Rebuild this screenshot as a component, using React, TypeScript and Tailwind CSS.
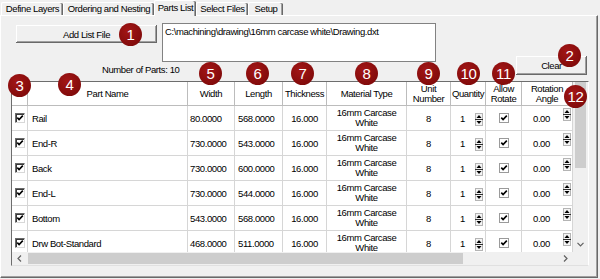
import React from "react";

const widths = [
  "w-[16px]",
  "w-[160px]",
  "w-[47px]",
  "w-[48px]",
  "w-[44px]",
  "w-[80px]",
  "w-[44px]",
  "w-[35px]",
  "w-[36px]",
  "w-[51px]",
];

const rows = [
  ["Rail", "80.0000", "568.0000"],
  ["End-R", "730.0000", "543.0000"],
  ["Back", "730.0000", "600.0000"],
  ["End-L", "730.0000", "544.0000"],
  ["Bottom", "543.0000", "568.0000"],
  ["Drw Bot-Standard", "468.0000", "511.0000"],
];

function Check({ flat }: { flat?: boolean }) {
  return (
    <span
      className={
        flat
          ? "w-[10px] h-[10px] bg-white border border-[#9a9a9a] flex items-center justify-center"
          : "w-[10px] h-[10px] bg-white border border-t-[#6a6a6a] border-l-[#6a6a6a] border-b-[#d8d8d8] border-r-[#d8d8d8] shadow-[inset_1px_1px_0_#3a3a3a] flex items-center justify-center"
      }
    >
      <svg width="8" height="8" viewBox="0 0 8 8">
        <path d="M1.3 3.6 L3.1 5.6 L6.8 1.6" fill="none" stroke="#000" strokeWidth="1.6" />
      </svg>
    </span>
  );
}

function Spin() {
  return (
    <svg width="8" height="13" viewBox="0 0 8 13" className="self-start mt-[2px]">
      <rect x="0.5" y="0.5" width="7" height="12" fill="#f4f4f4" stroke="#b4b4b4" />
      <line x1="0" y1="6.5" x2="8" y2="6.5" stroke="#303030" />
      <path d="M4 2 L6.5 5 L1.5 5 Z" fill="#000" />
      <path d="M1.5 8 L6.5 8 L4 11 Z" fill="#000" />
    </svg>
  );
}

function Badge({ n, cls }: { n: string; cls: string }) {
  return (
    <div
      className={
        "absolute w-[23px] h-[23px] rounded-full bg-[radial-gradient(circle_at_40%_35%,#a31616,#760707)] text-white text-[15px] leading-none flex items-center justify-center font-['Liberation_Sans',Arial,sans-serif] tracking-[-0.3px] " +
        cls
      }
    >
      {n}
    </div>
  );
}

const btn =
  "bg-[#f0f0f0] shadow-[inset_-1px_-1px_0_#696969,inset_1px_1px_0_#ffffff,inset_-2px_-2px_0_#a0a0a0] flex items-center justify-center";

export default function App() {
  const headers: (string | string[])[] = [
    "",
    "Part Name",
    "Width",
    "Length",
    "Thickness",
    "Material Type",
    ["Unit", "Number"],
    "Quantity",
    ["Allow", "Rotate"],
    ["Rotation", "Angle"],
  ];
  return (
    <div className="relative w-[600px] h-[279px] overflow-hidden bg-[#f0f0f0] text-black font-['Liberation_Sans',Arial,sans-serif] text-[9.5px] tracking-[-0.4px] leading-[11px]">
      {/* tabs */}
      <div className="relative z-10 h-[15px] flex items-end pl-[1px]">
        <div className="w-[62px] h-[13px] border-l border-t border-white rounded-t-[2px] shadow-[inset_-1px_0_0_#696969,inset_-2px_0_0_#a0a0a0] flex items-center justify-center pb-[1px]">
          Define Layers
        </div>
        <div className="w-[91px] h-[13px] border-l border-t border-white rounded-t-[2px] shadow-[inset_-1px_0_0_#696969,inset_-2px_0_0_#a0a0a0] flex items-center justify-center pb-[1px]">
          Ordering and Nesting
        </div>
        <div className="w-[42px] h-[16px] -mb-[1px] bg-[#f0f0f0] border-l border-t border-white rounded-t-[2px] shadow-[inset_-1px_0_0_#696969,inset_-2px_0_0_#a0a0a0] flex items-start justify-center pt-[1px]">
          Parts List
        </div>
        <div className="w-[52px] h-[13px] border-l border-t border-white rounded-t-[2px] shadow-[inset_-1px_0_0_#696969,inset_-2px_0_0_#a0a0a0] flex items-center justify-center pb-[1px]">
          Select Files
        </div>
        <div className="w-[35px] h-[13px] border-l border-t border-white rounded-t-[2px] shadow-[inset_-1px_0_0_#696969,inset_-2px_0_0_#a0a0a0] flex items-center justify-center pb-[1px]">
          Setup
        </div>
      </div>

      {/* panel */}
      <div className="w-[598px] h-[263px] border-t border-l border-white border-r border-r-[#696969] border-b border-b-[#696969] shadow-[inset_-1px_-1px_0_#a0a0a0] flex flex-col">
        {/* top section */}
        <div className="h-[65px] flex items-start">
          <div className="ml-[15px] w-[141px] flex flex-col">
            <div className={btn + " mt-[9px] h-[18px] w-[141px]"}>Add List File</div>
            <div className="mt-[21px] ml-[86px] whitespace-nowrap">Number of Parts: 10</div>
          </div>
          <div className="ml-[5px] mt-[7px] w-[274px] h-[39px] bg-white border border-[#828282] px-[2px] pt-[2px] whitespace-nowrap">
            C:\machining\drawing\16mm carcase white\Drawing.dxt
          </div>
          <div className={btn + " ml-[80px] mt-[40px] w-[71px] h-[19px]"}>Clear</div>
        </div>

        {/* grid */}
        <div className="ml-[10px] w-[578px] h-[185px] border-t border-l border-[#6d6d6d] border-b border-b-[#e0e0e0] border-r border-r-white bg-white flex flex-col">
          <div className="flex h-[170px]">
            <div className="w-[561px] flex flex-col">
              {/* header */}
              <div className="flex h-[24px] bg-white">
                {headers.map((h, i) => (
                  <div
                    key={i}
                    className={
                      widths[i] +
                      " h-[24px] border-r border-b border-[#bcbcbc] flex flex-col items-center justify-center leading-[10px] text-center"
                    }
                  >
                    {Array.isArray(h) ? (
                      <>
                        <span>{h[0]}</span>
                        <span>{h[1]}</span>
                      </>
                    ) : (
                      <span>{h}</span>
                    )}
                  </div>
                ))}
              </div>
              {/* body */}
              <div className="h-[146px] overflow-hidden">
                {rows.map((r, ri) => (
                  <div key={ri} className="flex h-[25px]">
                    <div className={widths[0] + " border-r border-b border-[#d6d6d6] flex items-center justify-center"}>
                      <Check />
                    </div>
                    <div className={widths[1] + " border-r border-b border-[#d6d6d6] flex items-center pl-[4px] whitespace-nowrap"}>
                      {r[0]}
                    </div>
                    <div className={widths[2] + " border-r border-b border-[#d6d6d6] flex items-center pl-[2px]"}>{r[1]}</div>
                    <div className={widths[3] + " border-r border-b border-[#d6d6d6] flex items-center pl-[3px]"}>{r[2]}</div>
                    <div className={widths[4] + " border-r border-b border-[#d6d6d6] flex items-center justify-center"}>16.000</div>
                    <div className={widths[5] + " border-r border-b border-[#d6d6d6] flex flex-col items-center justify-center leading-[10px]"}>
                      <span>16mm Carcase</span>
                      <span>White</span>
                    </div>
                    <div className={widths[6] + " border-r border-b border-[#d6d6d6] flex items-center justify-center"}>8</div>
                    <div className={widths[7] + " border-r border-b border-[#d6d6d6] flex items-center pl-[9px] pr-[2px]"}>
                      <span>1</span>
                      <span className="ml-auto flex">
                        <Spin />
                      </span>
                    </div>
                    <div className={widths[8] + " border-r border-b border-[#d6d6d6] flex items-center justify-center"}>
                      <Check flat />
                    </div>
                    <div className={widths[9] + " border-r border-b border-[#d6d6d6] flex items-center pl-[11px] pr-[1px]"}>
                      <span>0.00</span>
                      <span className="ml-auto flex self-start">
                        <Spin />
                      </span>
                    </div>
                  </div>
                ))}
              </div>
            </div>
            {/* vertical scrollbar */}
            <div className="w-[15px] h-[170px] bg-[#f0f0f0] flex flex-col">
              <div className="h-[86px] mx-[2px] bg-[#cdcdcd]"></div>
              <div className="flex-1"></div>
              <div className="h-[15px] flex items-center justify-center">
                <svg width="7" height="5" viewBox="0 0 7 5">
                  <path d="M0.5 0.8 L3.5 3.8 L6.5 0.8" fill="none" stroke="#606060" strokeWidth="1.2" />
                </svg>
              </div>
            </div>
          </div>
          {/* horizontal scrollbar */}
          <div className="h-[13px] flex bg-[#f0f0f0]">
            <div className="w-[15px] flex items-center justify-center">
              <svg width="5" height="7" viewBox="0 0 5 7">
                <path d="M4 0.5 L1 3.5 L4 6.5" fill="none" stroke="#606060" strokeWidth="1.2" />
              </svg>
            </div>
            <div className="w-[435px] ml-[1px] my-[1px] bg-[#cdcdcd]"></div>
            <div className="flex-1"></div>
            <div className="w-[15px] flex items-center justify-center">
              <svg width="5" height="7" viewBox="0 0 5 7">
                <path d="M1 0.5 L4 3.5 L1 6.5" fill="none" stroke="#606060" strokeWidth="1.2" />
              </svg>
            </div>
            <div className="w-[15px] bg-[#f0f0f0]"></div>
          </div>
        </div>
      </div>

      {/* badges */}
      <Badge n="1" cls="left-[119px] top-[23px]" />
      <Badge n="2" cls="left-[558px] top-[44px]" />
      <Badge n="3" cls="left-[8px] top-[74px]" />
      <Badge n="4" cls="left-[58px] top-[73px]" />
      <Badge n="5" cls="left-[199px] top-[62px]" />
      <Badge n="6" cls="left-[246px] top-[62px]" />
      <Badge n="7" cls="left-[291px] top-[62px]" />
      <Badge n="8" cls="left-[355px] top-[62px]" />
      <Badge n="9" cls="left-[417px] top-[62px]" />
      <Badge n="10" cls="left-[457px] top-[62px]" />
      <Badge n="11" cls="left-[492px] top-[62px]" />
      <Badge n="12" cls="left-[564px] top-[85px]" />
    </div>
  );
}
